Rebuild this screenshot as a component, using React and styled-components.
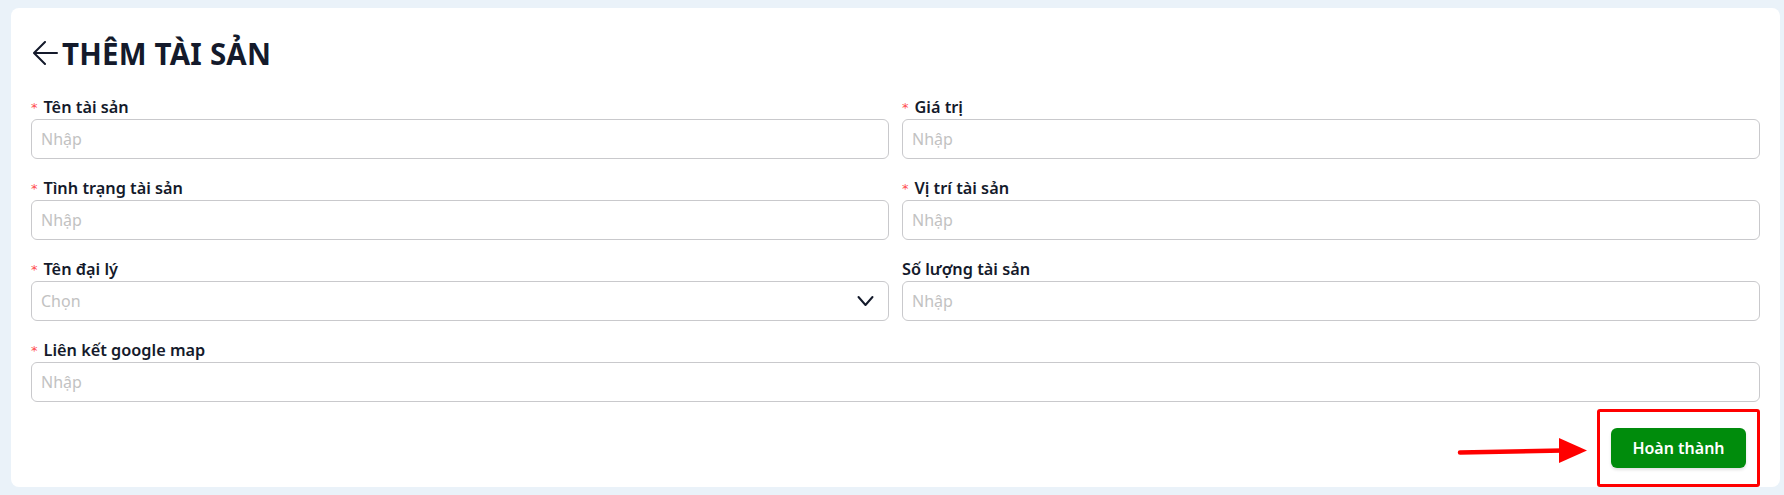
import React from 'react';
import styled, { createGlobalStyle } from 'styled-components';

const GlobalStyle = createGlobalStyle`
  html, body {
    margin: 0;
    padding: 0;
    background: #eaf2f9;
    font-family: "Noto Sans", "Open Sans", sans-serif;
  }
  * { box-sizing: border-box; }
`;

const Page = styled.div`
  width: 1784px;
  height: 495px;
  padding: 8px 4px 8px 11px;
  background: #eaf2f9;
`;

const Card = styled.div`
  background: #fff;
  border-radius: 8px;
  padding: 20px 20px 0;
  height: 100%;
`;

const Title = styled.h1`
  margin: 0 0 18px;
  height: 50px;
  display: flex;
  align-items: center;
  gap: 4px;
  font-size: 29.5px;
  font-weight: 700;
  color: #141a2b;
  letter-spacing: 0.2px;
`;

const BackButton = styled.button`
  border: 0;
  background: none;
  padding: 0;
  margin-left: 2px;
  display: flex;
  cursor: pointer;
  color: #141a2b;
`;

const Grid = styled.div`
  display: grid;
  grid-template-columns: 1fr 1fr;
  column-gap: 13px;
  row-gap: 18px;
`;

const Field = styled.div`
  display: flex;
  flex-direction: column;
  grid-column: ${p => (p.$full ? '1 / -1' : 'auto')};
`;

const Label = styled.label`
  height: 22px;
  margin-bottom: 1px;
  display: flex;
  align-items: center;
  font-size: 16.3px;
  font-weight: 600;
  color: #141a2b;
`;

const Star = styled.span`
  color: #ff4d4f;
  font-size: 13px;
  font-weight: 400;
  margin-right: 6px;
  font-family: "DejaVu Sans", sans-serif;
`;

const Input = styled.input`
  height: 40px;
  width: 100%;
  border: 1px solid #c9c9cc;
  border-radius: 6px;
  padding: 0 9px;
  font-family: inherit;
  font-size: 16px;
  color: #141a2b;
  outline: none;
  &::placeholder { color: #c2c2c2; }
`;

const SelectBox = styled.div`
  height: 40px;
  border: 1px solid #c9c9cc;
  border-radius: 6px;
  padding: 0 14px 0 9px;
  display: flex;
  align-items: center;
  justify-content: space-between;
  font-size: 16px;
  color: #c2c2c2;
  cursor: pointer;
`;

const Footer = styled.div`
  display: flex;
  justify-content: flex-end;
  align-items: center;
  gap: 8px;
  margin-top: 7px;
`;

const Pointer = styled.svg`
  margin-top: 6px;
`;

const Highlight = styled.div`
  border: 3px solid #ff0000;
  border-radius: 3px;
  padding: 16px 11px;
`;

const SubmitButton = styled.button`
  width: 135px;
  height: 40px;
  border: 0;
  border-radius: 6px;
  background: #008c0c;
  color: #fff;
  font-family: inherit;
  font-size: 16px;
  font-weight: 600;
  box-shadow: 0 2px 3px rgba(0, 0, 0, 0.12);
  cursor: pointer;
`;

const TextField = ({ label, required, full }) => (
  <Field $full={full}>
    <Label>
      {required && <Star>*</Star>}
      {label}
    </Label>
    <Input placeholder="Nhập" />
  </Field>
);

export default function App() {
  return (
    <>
      <GlobalStyle />
      <Page>
        <Card>
          <Title>
            <BackButton aria-label="Quay lại">
              <svg width="25" height="24" viewBox="0 0 25 24" fill="none" stroke="currentColor" strokeWidth="2" strokeLinecap="round" strokeLinejoin="round">
                <path d="M24 12H2" />
                <path d="M12 1 1 12l11 11" />
              </svg>
            </BackButton>
            THÊM TÀI SẢN
          </Title>
          <Grid>
            <TextField label="Tên tài sản" required />
            <TextField label="Giá trị" required />
            <TextField label="Tình trạng tài sản" required />
            <TextField label="Vị trí tài sản" required />
            <Field>
              <Label>
                <Star>*</Star>
                Tên đại lý
              </Label>
              <SelectBox>
                Chọn
                <svg width="17" height="12" viewBox="0 0 17 12" fill="none" stroke="#141a2b" strokeWidth="2" strokeLinecap="round" strokeLinejoin="round">
                  <path d="M1.5 2 8.5 10 15.5 2" />
                </svg>
              </SelectBox>
            </Field>
            <TextField label="Số lượng tài sản" />
            <TextField label="Liên kết google map" required full />
          </Grid>
          <Footer>
            <Pointer width="132" height="30" viewBox="0 0 132 30">
              <path d="M3 16.5 L106 14.5" stroke="#ff0000" strokeWidth="4.5" strokeLinecap="round" />
              <path d="M102 2 L130 14.5 L102 27 Z" fill="#ff0000" />
            </Pointer>
            <Highlight>
              <SubmitButton>Hoàn thành</SubmitButton>
            </Highlight>
          </Footer>
        </Card>
      </Page>
    </>
  );
}
